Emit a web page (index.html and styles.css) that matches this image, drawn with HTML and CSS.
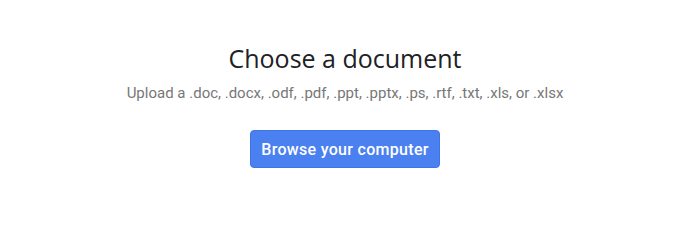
FILE: index.html
```html
<!DOCTYPE html>
<html lang="en">
<head>
    <meta charset="UTF-8">
    <title>Choose a document</title>
    <link rel="stylesheet" href="styles.css">
</head>
<body>

<div class="picker">
    <h1 class="picker-title">Choose a document</h1>
    <div class="picker-hint">Upload a .doc, .docx, .odf, .pdf, .ppt, .pptx, .ps, .rtf, .txt, .xls, or .xlsx</div>
    <button class="browse-btn">Browse your computer</button>
</div>

</body>
</html>
```

FILE: styles.css
```css
body {
    margin: 0;
    background-color: #ffffff;
    font-family: Roboto, Arial, sans-serif;
}
.picker {
    display: flex;
    flex-direction: column;
    align-items: center;
    padding-top: 42px;
    padding-left: 10px;
}
.picker-title {
    margin: 0;
    font-family: "Open Sans", Roboto, sans-serif;
    font-weight: 400;
    font-size: 25px;
    line-height: 32px;
    color: #202124;
}
.picker-hint {
    margin-top: 9px;
    font-size: 15px;
    line-height: 20px;
    color: #777777;
}
.browse-btn {
    margin-top: 27px;
    width: 190px;
    height: 38px;
    background-color: #4a80f0;
    border: 1px solid #3d74e8;
    border-radius: 4px;
    color: #ffffff;
    font-family: Roboto, Arial, sans-serif;
    font-weight: 500;
    font-size: 16px;
    letter-spacing: 0.3px;
    cursor: pointer;
}
```
